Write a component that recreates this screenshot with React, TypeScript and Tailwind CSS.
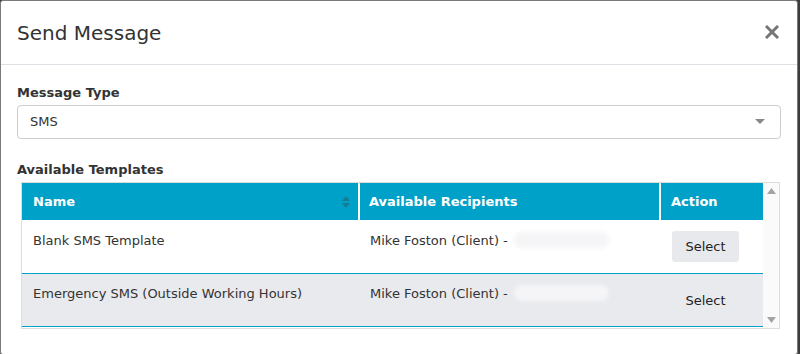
import React from "react";

const font = { fontFamily: '"DejaVu Sans", Verdana, sans-serif' };

function Row({ name, alt, btnBg, h, pt }: { name: string; alt?: boolean; btnBg?: boolean; h: string; pt: string }) {
  return (
    <div className={`flex ${h} border-b border-[#00a1c9] ${alt ? "bg-[#e9eaee]" : "bg-white"}`}>
      <div className={`w-[338px] pl-[11px] ${pt} text-[13px] text-[#333]`}>{name}</div>
      <div className={`w-[301px] pl-[10px] ${pt} text-[13px] text-[#333] flex items-start`}>
        <span>Mike Foston (Client) -</span>
        <span className="ml-[6px] mt-[1px] h-[16px] w-[95px] rounded-full bg-[#f5f5f7] blur-[2px]"></span>
      </div>
      <div className="flex-1 pl-[11px] pt-[11px]">
        <div
          className={`flex h-[31px] w-[67px] items-center justify-center rounded-[3px] text-[13px] text-[#222] ${
            btnBg ? "bg-[#e8e9ed]" : ""
          }`}
        >
          Select
        </div>
      </div>
    </div>
  );
}

export default function App() {
  return (
    <div className="h-[354px] w-[800px] overflow-hidden bg-[#3c3c3c]" style={font}>
      <div className="h-[355px] w-[798px] rounded-[3px] border border-[#7a7a7a] bg-white">
        <div className="flex h-[64px] items-center justify-between border-b border-[#dcdfe3] pl-[16px] pr-[18px]">
          <div className="text-[20px] text-[#333]">Send Message</div>
          <svg width="14" height="14" viewBox="0 0 14 14" className="mt-[-2px]">
            <path d="M2 2 L12 12 M12 2 L2 12" stroke="#777" strokeWidth="3" strokeLinecap="square" />
          </svg>
        </div>
        <div className="px-[16px] pt-[18px]">
          <div className="text-[13px] font-bold text-[#333]">Message Type</div>
          <div className="mt-[2px] flex h-[34px] items-center justify-between rounded-[4px] border border-[#ccc] pl-[12px] pr-[15px]">
            <span className="text-[13px] text-[#333]">SMS</span>
            <svg width="10" height="6" viewBox="0 0 10 6">
              <path d="M0 0 L10 0 L5 5 Z" fill="#888" />
            </svg>
          </div>
          <div className="mt-[21px] text-[13px] font-bold text-[#333]">Available Templates</div>
          <div className="ml-[4px] mt-[3px] flex h-[147px] w-[759px] border border-[#ddd]">
            <div className="w-[741px]">
              <div className="flex h-[37px] bg-[#00a1c9] text-[13px] font-bold text-white">
                <div className="flex w-[338px] items-center justify-between border-r-2 border-white pl-[11px] pr-[8px]">
                  <span>Name</span>
                  <svg width="8" height="14" viewBox="0 0 8 14">
                    <path d="M0 6 L4 1 L8 6 Z" fill="#1b7a94" />
                    <path d="M0 8 L4 13 L8 8 Z" fill="#1b7a94" />
                  </svg>
                </div>
                <div className="flex w-[301px] items-center border-r-2 border-white pl-[9px]">Available Recipients</div>
                <div className="flex flex-1 items-center pl-[10px]">Action</div>
              </div>
              <Row name="Blank SMS Template" btnBg h="h-[54px]" pt="pt-[11px]" />
              <Row name="Emergency SMS (Outside Working Hours)" alt h="h-[53px]" pt="pt-[10px]" />
            </div>
            <div className="flex w-[16px] flex-col items-center justify-between bg-[#fafafa] py-[5px]">
              <svg width="9" height="6" viewBox="0 0 9 6">
                <path d="M0 6 L4.5 0 L9 6 Z" fill="#a3a3a3" />
              </svg>
              <svg width="9" height="6" viewBox="0 0 9 6">
                <path d="M0 0 L4.5 6 L9 0 Z" fill="#a3a3a3" />
              </svg>
            </div>
          </div>
        </div>
      </div>
    </div>
  );
}
